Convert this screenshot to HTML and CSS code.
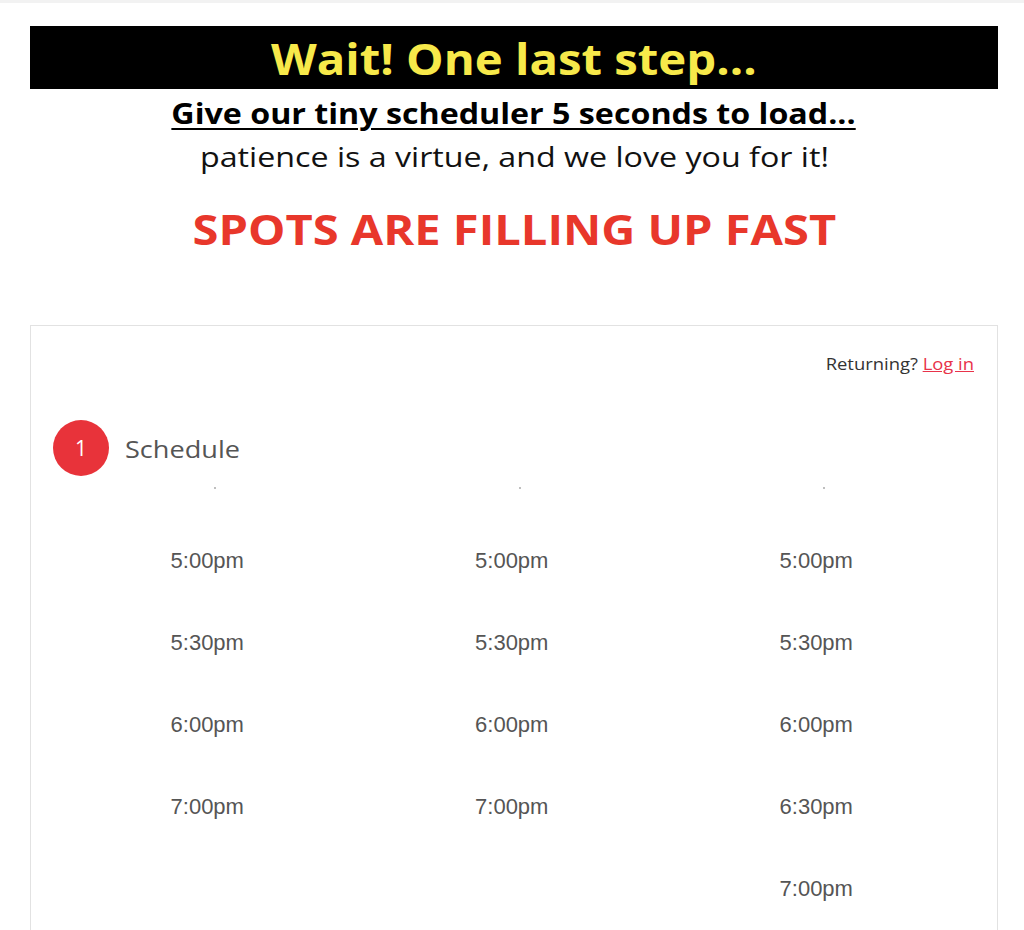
FILE: index.html
```html
<!DOCTYPE html>
<html>
<head>
<meta charset="utf-8">
<link rel="stylesheet" href="styles.css">
</head>
<body>
<div class="topline"></div>
<div class="page">
  <div class="banner"><h1 class="banner-title">Wait! One last step...</h1></div>
  <div class="line"><p class="sub-strong">Give our tiny scheduler 5 seconds to load...</p></div>
  <div class="line"><p class="sub">patience is a virtue, and we love you for it!</p></div>
  <div class="line"><h2 class="urgent">SPOTS ARE FILLING UP FAST</h2></div>

  <div class="card">
    <div class="returning"><span class="ret-text">Returning? <a class="login" href="#">Log in</a></span></div>
    <div class="step">
      <span class="step-num">1</span>
      <span class="step-label">Schedule</span>
    </div>
    <div class="cols">
      <div class="col">
        <span class="dot"></span>
        <span class="time">5:00pm</span>
        <span class="time">5:30pm</span>
        <span class="time">6:00pm</span>
        <span class="time">7:00pm</span>
      </div>
      <div class="col">
        <span class="dot"></span>
        <span class="time">5:00pm</span>
        <span class="time">5:30pm</span>
        <span class="time">6:00pm</span>
        <span class="time">7:00pm</span>
      </div>
      <div class="col">
        <span class="dot"></span>
        <span class="time">5:00pm</span>
        <span class="time">5:30pm</span>
        <span class="time">6:00pm</span>
        <span class="time">6:30pm</span>
        <span class="time">7:00pm</span>
      </div>
    </div>
  </div>
</div>
</body>
</html>
```

FILE: styles.css
```css
html, body {
  margin: 0;
  padding: 0;
  background: #ffffff;
  overflow: hidden;
}
body {
  font-family: "Open Sans", "Noto Sans", sans-serif;
  height: 930px;
}
.topline {
  height: 3px;
  background: #f2f2f2;
}
.page {
  padding: 23px 26px 0 30px;
}
.banner {
  background: #000000;
  height: 63px;
  display: flex;
  align-items: center;
  justify-content: center;
}
.banner-title {
  margin: 0;
  color: #f7e94a;
  font-size: 43px;
  font-weight: 700;
  line-height: 1;
  padding-top: 2px;
  transform: scaleX(1.1);
}
.line {
  display: flex;
  justify-content: center;
}
.sub-strong {
  margin: 6px 0 0 0;
  font-size: 28px;
  font-weight: 700;
  line-height: 36px;
  color: #000;
  text-decoration: underline;
  text-decoration-thickness: 2px;
  text-underline-offset: 4px;
  transform: scaleX(1.15);
}
.sub {
  margin: 7px 0 0 0;
  font-size: 28px;
  line-height: 36px;
  color: #111;
  transform: scaleX(1.15);
}
.urgent {
  margin: 30px 0 0 0;
  color: #e8372b;
  font-size: 42px;
  font-weight: 700;
  line-height: 50px;
  transform: scaleX(1.12);
}
.card {
  margin-top: 71px;
  border: 1px solid #e2e2e2;
  height: 700px;
  padding: 0 23px 0 22px;
  font-family: "Open Sans", "Noto Sans", sans-serif;
}
.returning {
  display: flex;
  justify-content: flex-end;
  font-size: 16px;
  color: #333;
  padding-top: 26px;
  line-height: 24px;
}
.ret-text {
  transform: scaleX(1.15);
  transform-origin: right center;
}
.login {
  color: #e8334a;
  text-decoration: underline;
}
.step {
  display: flex;
  align-items: center;
  gap: 16px;
  margin-top: 44px;
}
.step-num {
  width: 56px;
  height: 56px;
  border-radius: 50%;
  background: #e8333a;
  color: #fff;
  font-size: 21px;
  display: flex;
  align-items: center;
  justify-content: center;
}
.step-label {
  font-size: 24px;
  color: #555;
  transform: scaleX(1.13);
  transform-origin: left center;
}
.cols {
  display: grid;
  grid-template-columns: repeat(3, 304.5px);
  margin-top: 11px;
  padding-left: 2px;
}
.col {
  display: flex;
  flex-direction: column;
  align-items: center;
}
.dot {
  width: 2px;
  height: 2px;
  background: #aaa;
  border-radius: 50%;
  margin-left: 16px;
  margin-bottom: 60px;
}
.time {
  font-family: "Liberation Sans", Arial, sans-serif;
  font-size: 22px;
  color: #555;
  line-height: 24px;
  height: 82px;
}
```
